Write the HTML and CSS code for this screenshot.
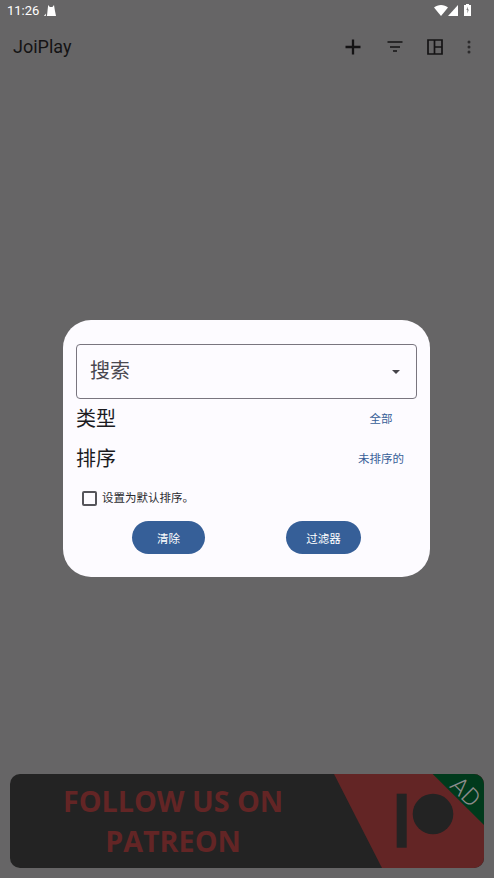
FILE: index.html
```html
<!DOCTYPE html>
<html lang="zh">
<head>
<meta charset="utf-8">
<title>JoiPlay</title>
<link rel="stylesheet" href="styles.css">
</head>
<body>
<div class="screen">
  <div class="status">
    <span class="time">11:26</span>
    <svg class="cat" width="12" height="11" viewBox="0 0 12 11"><path d="M4.200 0L5.800 2H8.400L10 0L10.800 5L12 11H3L3.600 5zM0 11L1.800 8.500V11z" fill="#fff"/></svg>
    <span class="grow"></span>
    <svg width="14" height="11" viewBox="0 0 14 11"><path d="M0 2.600C1.900 .9 4.300 0 7 0S12.100 .9 14 2.600L7 11z" fill="#fff"/></svg>
    <svg class="signal" width="10" height="11" viewBox="0 0 10 11"><path d="M10 0v11H0z" fill="#fff"/></svg>
    <svg width="7" height="12" viewBox="0 0 7 12"><path d="M2 0h3v1h2v11H0V1h2z" fill="#fff"/><path d="M3.700 2.500L2.500 6h1v3.500L4.700 5.500h-1z" fill="#666"/></svg>
  </div>
  <div class="toolbar">
    <span class="title">JoiPlay</span>
    <span class="grow"></span>
    <svg class="tool add" width="16" height="16" viewBox="0 0 16 16"><path d="M8 .5v15M.5 8h15" stroke="#141314" stroke-width="2.300" fill="none"/></svg>
    <svg class="tool filter" width="16" height="12" viewBox="0 0 16 12"><path d="M.5 1h15M3 6h10M6 10h4" stroke="#141314" stroke-width="1.700" fill="none"/></svg>
    <svg class="tool layout" width="16" height="16" viewBox="0 0 16 16"><path d="M1 1h14v14H1zM7.500 1v14M7.500 8H15" stroke="#141314" stroke-width="1.700" fill="none"/></svg>
    <svg class="tool more" width="4" height="14" viewBox="0 0 4 14"><circle cx="2" cy="2" r="1.500"/><circle cx="2" cy="7" r="1.500"/><circle cx="2" cy="12" r="1.500"/></svg>
  </div>
  <div class="grow"></div>
  <div class="ad">
    <div class="ad-copy">FOLLOW US ON<br>PATREON</div>
    <svg class="ad-art" width="150" height="94" viewBox="0 0 150 94">
      <path d="M0 0H150V94H48z" fill="#632525"/>
      <path d="M98.700 0H150V51z" fill="#003a1c"/>
      <rect x="62.700" y="19.700" width="10" height="54" fill="#232323"/>
      <circle cx="99" cy="40" r="20.300" fill="#232323"/>
    </svg>
    <span class="ad-tag">AD</span>
  </div>
</div>
<div class="dialog">
  <div class="search"><span>搜索</span><i class="caret"></i></div>
  <div class="row"><span class="label">类型</span><span class="value">全部</span></div>
  <div class="row"><span class="label">排序</span><span class="value">未排序的</span></div>
  <div class="check"><i class="box"></i><span class="check-text">设置为默认排序。</span></div>
  <div class="actions">
    <button class="btn btn-clear">清除</button>
    <button class="btn btn-filter">过滤器</button>
  </div>
</div>
</body>
</html>
```
FILE: styles.css
```css
* { box-sizing: border-box; }
html, body { margin: 0; height: 100%; }
body { position: relative; width: 494px; height: 878px; overflow: hidden; background: #666566; font-family: Roboto, "Noto Sans CJK SC", sans-serif; }
.screen { display: flex; flex-direction: column; height: 878px; padding-bottom: 10px; }
.grow { flex: 1; }
.status { display: flex; align-items: center; height: 20px; padding: 0 23px 0 7px; color: #fff; font-size: 13px; }
.cat { margin-left: 5px; }
.signal { margin: 0 6px 0 0; }
.toolbar { display: flex; align-items: center; height: 52px; padding: 0 23px 0 13px; }
.title { font-size: 18px; color: #141314; }
.tool { margin-top: 2px; }
.add { margin-right: 26px; }
.filter { margin-right: 24px; }
.layout { margin-right: 24px; }
.more { fill: #2c2b2c; }
.ad { position: relative; display: flex; align-self: center; width: 474px; height: 94px; background: #232323; border-radius: 10px; }
.ad-copy { width: 326px; padding-top: 7px; text-align: center; font: 700 28.7px/40px "Open Sans", sans-serif; color: #632525; }
.ad-art { position: absolute; right: 0; top: 0; border-radius: 0 10px 10px 0; }
.ad-tag { position: absolute; right: 3px; top: 6px; font-size: 24px; font-weight: 300; line-height: 24px; color: #8b8b8b; transform: rotate(45deg); }
.dialog { position: absolute; left: 63px; top: 320px; width: 367px; height: 257px; padding: 24px 13px 0 13px; background: #fdfbff; border-radius: 28px; display: flex; flex-direction: column; }
.search { display: flex; align-items: center; justify-content: space-between; height: 55px; padding: 0 16px 5px 13px; border: 1px solid #79757f; border-radius: 4px; font-size: 20px; color: #4a4850; }
.caret { width: 0; height: 0; margin-top: 5px; border: 4px solid transparent; border-top-color: #45434a; border-bottom: 0; }
.row { display: flex; align-items: center; justify-content: space-between; height: 40px; padding-bottom: 4px; }
.label { font-size: 20px; color: #1b1b1f; }
.value { width: 72px; padding-top: 2px; text-align: center; font-size: 11.5px; color: #385f98; }
.check { display: flex; align-items: center; gap: 5px; padding-left: 6px; height: 38px; font-size: 11.5px; color: #2b2b30; }
.check-text { margin-top: -2px; }
.box { width: 15px; height: 15px; border: 2px solid #55545a; border-radius: 2px; }
.actions { display: flex; padding-left: 56px; margin-top: 4px; }
.btn { height: 33px; border: 0; border-radius: 17px; background: #365f98; color: #fff; font: 11.5px Roboto, "Noto Sans CJK SC", sans-serif; }
.btn-clear { width: 73px; }
.btn-filter { width: 75px; margin-left: 81px; }
```
